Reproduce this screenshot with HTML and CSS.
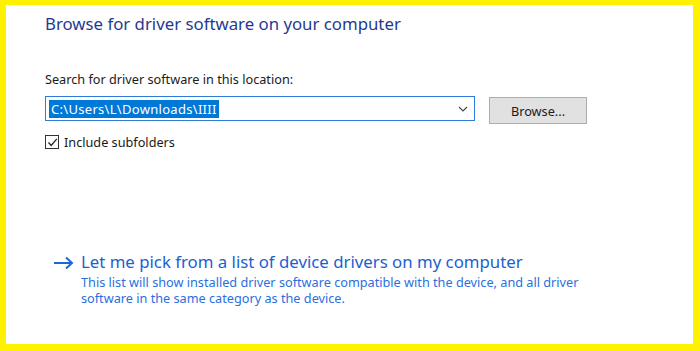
FILE: index.html
```html
<!DOCTYPE html>
<html>
  <head>
    <title>Update Drivers</title>
    <link rel="stylesheet" href="styles.css">
  </head>
  <body>
    <div class="frame">
      <h1 class="title">Browse for driver software on your computer</h1>

      <div class="label">Search for driver software in this location:</div>
      <div class="path-row">
        <div class="combo">
          <span class="combo-text">C:\Users\L\Downloads\IIII</span>
          <svg class="chevron" width="10" height="6" viewBox="0 0 10 6">
            <polyline points="1,1 5,5 9,1" fill="none" stroke="#444" stroke-width="1.1" />
          </svg>
        </div>
        <button class="btn">Browse...</button>
      </div>

      <label class="check-row">
        <span class="checkbox">
          <svg width="11" height="11" viewBox="0 0 11 11">
            <polyline points="1.5,5.5 4.2,8.5 9.8,1.8" fill="none" stroke="#222" stroke-width="1.3" />
          </svg>
        </span>
        Include subfolders
      </label>

      <div class="pick">
        <svg class="arrow" width="21" height="14" viewBox="0 0 21 14">
          <line x1="1" y1="7" x2="19" y2="7" stroke="#1c66d9" stroke-width="2" />
          <polyline points="13,1.5 19,7 13,12.5" fill="none" stroke="#1c66d9" stroke-width="2" />
        </svg>
        <div class="pick-body">
          <div class="pick-title">Let me pick from a list of device drivers on my computer</div>
          <div class="pick-desc">This list will show installed driver software compatible with the device, and all driver software in the same category as the device.</div>
        </div>
      </div>
    </div>
  </body>
</html>
```

FILE: styles.css
```css
html,
body {
  margin: 0;
  height: 100%;
}
body {
  background: #fff200;
  padding: 5px 7px 7px 6px;
  box-sizing: border-box;
  font-family: "Noto Sans", "Open Sans", sans-serif;
}
.frame {
  background: #fff;
  height: 100%;
  padding: 0 0 0 39px;
  box-sizing: border-box;
  overflow: hidden;
}
.title {
  margin: 0;
  padding-top: 8px;
  font-size: 16.8px;
  font-weight: normal;
  color: #1f3a93;
  line-height: 22px;
}
.label {
  margin-top: 36px;
  font-size: 12.7px;
  color: #1a1a1a;
  line-height: 16px;
}
.path-row {
  display: flex;
  align-items: flex-start;
  margin-top: 9px;
}
.combo {
  width: 430px;
  height: 25px;
  box-sizing: border-box;
  border: 1px solid #2f7bdc;
  display: flex;
  align-items: center;
  padding: 0 6px 0 3px;
}
.combo-text {
  background: #0078d7;
  color: #fff;
  font-size: 13px;
  letter-spacing: 0.3px;
  line-height: 18px;
  padding: 0 2px 0 2px;
}
.chevron {
  margin-left: auto;
}
.btn {
  margin: 1px 0 0 14px;
  width: 98px;
  height: 27px;
  background: #e1e1e1;
  border: 1px solid #adadad;
  font-family: inherit;
  font-size: 12.7px;
  color: #1a1a1a;
  padding: 0;
}
.check-row {
  display: flex;
  align-items: center;
  gap: 5px;
  margin-top: 9px;
  font-size: 12.7px;
  color: #1a1a1a;
}
.checkbox {
  width: 14px;
  height: 14px;
  box-sizing: border-box;
  border: 1px solid #333;
  display: flex;
  align-items: center;
  justify-content: center;
}
.pick {
  display: flex;
  align-items: flex-start;
  margin-top: 100px;
  padding-left: 8px;
}
.arrow {
  margin-top: 5px;
  flex: none;
}
.pick-body {
  margin-left: 7px;
}
.pick-title {
  font-size: 16.8px;
  color: #1c5fd0;
  line-height: 22px;
}
.pick-desc {
  width: 520px;
  font-size: 12.7px;
  color: #2a6fe0;
  line-height: 16px;
  margin-top: 1px;
}
```
